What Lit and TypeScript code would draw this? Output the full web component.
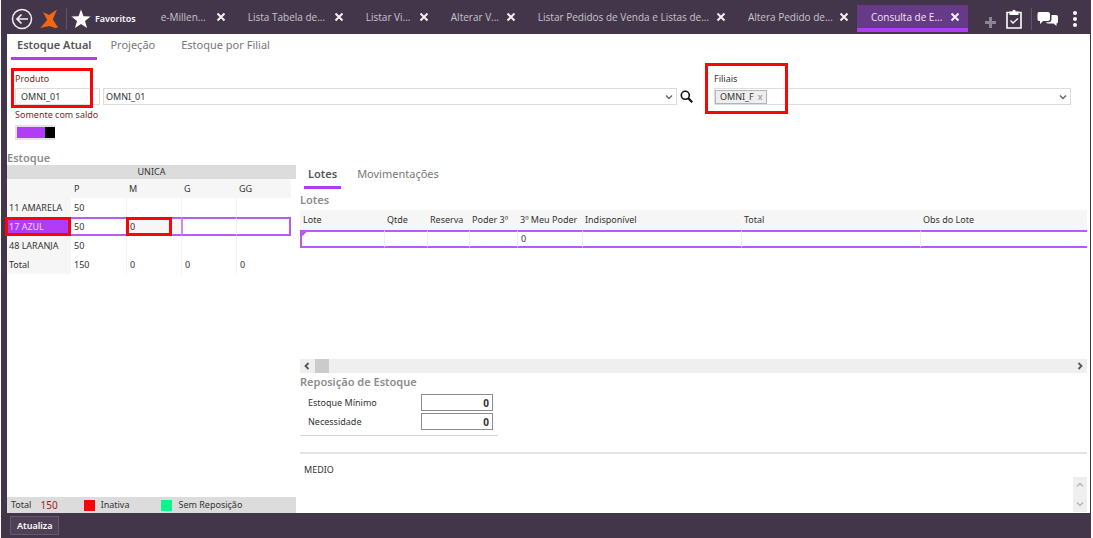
import { LitElement, html, css, svg } from "lit";
import { customElement, state } from "lit/decorators.js";
import { classMap } from "lit/directives/class-map.js";

const WINDOW_TABS = [
  "e-Millen...",
  "Lista Tabela de...",
  "Listar Vi...",
  "Alterar V...",
  "Listar Pedidos de Venda e Listas de...",
  "Altera Pedido de...",
  "Consulta de E...",
];

const SIZES = ["P", "M", "G", "GG"];

const STOCK = [
  { color: "11 AMARELA", values: ["50", "", "", ""] },
  { color: "17 AZUL", values: ["50", "0", "", ""] },
  { color: "48 LARANJA", values: ["50", "", "", ""] },
];

const TOTALS = ["150", "0", "0", "0"];

const LOT_COLUMNS = ["Lote", "Qtde", "Reserva", "Poder 3º", "3º Meu Poder", "Indisponível", "Total", "Obs do Lote"];
const LOT_ROW = ["", "", "", "", "0", "", "", ""];

const closeIcon = html`<svg class="close" viewBox="0 0 10 10" aria-hidden="true"><path d="M1.5 1.5 8.5 8.5M8.5 1.5 1.5 8.5" /></svg>`;

const chevron = (d: string) =>
  html`<svg class="chevron" viewBox="0 0 8 8" aria-hidden="true">${svg`<path d=${d} />`}</svg>`;
const DOWN = "M1 2.5 4 5.5 7 2.5";
const UP = "M1 5.5 4 2.5 7 5.5";
const LEFT = "M5.5 1 2.5 4 5.5 7";
const RIGHT = "M2.5 1 5.5 4 2.5 7";

@customElement("app-root")
export class AppRoot extends LitElement {
  @state() private activeRow = 1;
  @state() private onlyWithStock = true;

  static styles = css`
    :host {
      display: flex;
      flex-direction: column;
      box-sizing: border-box;
      min-height: 100vh;
      padding: 0 2px 0 1px;
      background: #fff;
      color: #333;
      font-family: "Noto Sans", "Open Sans", sans-serif;
      font-size: 9px;
      line-height: 12px;
    }
    *, *::before, *::after { box-sizing: border-box; }
    button, input, select {
      margin: 0;
      padding: 0;
      border: 0;
      border-radius: 0;
      background: none;
      color: inherit;
      font: inherit;
    }
    svg { display: block; }
    h2 {
      margin: 0;
      color: #8c8c8c;
      font-size: 11px;
      font-weight: 600;
      line-height: 14px;
    }

    .topbar {
      display: flex;
      height: 34px;
      padding: 5px 10px 2px 10px;
      background: #43364a;
      color: #fff;
    }
    .brand { display: flex; align-items: center; }
    .back svg { width: 22px; height: 22px; }
    .logo { width: 18px; height: 20px; margin: 0 0 0 7px; }
    .rule { width: 1px; height: 22px; background: #5f5366; }
    .brand .rule { margin: 0 4px 0 8px; }
    .favorites { display: flex; align-items: center; gap: 4px; }
    .favorites svg { width: 20px; height: 20px; }
    .favorites span { font-weight: 600; line-height: 12px; }
    .windows {
      display: grid;
      flex: 1;
      grid-template-columns: 87fr 118fr 85fr 87fr 210fr 123fr 111fr;
      margin: 0 17px 0 11px;
    }
    .window {
      display: flex;
      align-items: center;
      justify-content: space-between;
      padding: 0 8px 4px 14px;
      color: #c9c3cc;
      font-family: "Open Sans", "Noto Sans", sans-serif;
      font-size: 10px;
      white-space: nowrap;
    }
    .window.active {
      padding-bottom: 0;
      border-bottom: 4px solid #b03cf6;
      background: #663a86;
      color: #eee6f3;
    }
    .close {
      width: 10px;
      height: 10px;
      fill: none;
      stroke: #f4f1f5;
      stroke-width: 2;
    }
    .tools { display: flex; align-items: center; }
    .add svg { width: 11px; height: 11px; margin: 8px 10px 0 0; }
    .tasks svg { width: 16px; height: 20px; }
    .tools .rule { margin: 0 5px 0 9px; }
    .chat svg { width: 22px; height: 16px; }
    .more svg { width: 4px; height: 16px; margin: 0 4px 0 14px; }

    main {
      display: flex;
      flex: 1;
      flex-direction: column;
      border-left: 6px solid #43364a;
      border-right: 1px solid #43364a;
    }
    .tabs { display: flex; color: #777; font-size: 11px; line-height: 14px; }
    .tabs button { padding: 0 4px 5px; border-bottom: 3px solid transparent; white-space: nowrap; }
    .tabs button.on { border-color: #b03cf6; color: #555; font-weight: 600; }
    .main-tabs { gap: 7px; padding: 4px 4px 0; }
    .main-tabs button { padding: 0 13px 5px 6px; }
    .main-tabs button.on { padding-right: 6px; }

    .filters {
      display: grid;
      grid-template-columns: 85px minmax(0, 1fr) 14px 374px;
      column-gap: 3px;
      padding: 13px 19px 0 8px;
    }
    .field { position: relative; display: flex; flex-direction: column; gap: 3px; }
    .field label { white-space: nowrap; }
    .required { color: #8e1b22; }
    .box {
      height: 17px;
      width: 100%;
      border: 1px solid #ddd;
      background: #fff;
    }
    input.box { padding: 0 5px; }
    .combo { position: relative; align-self: end; }
    .combo select { display: block; appearance: none; padding: 0 2px; }
    .combo .chevron { position: absolute; top: 5px; right: 4px; pointer-events: none; }
    .chevron { width: 8px; height: 8px; fill: none; stroke: #666; stroke-width: 1.4; }
    .search { align-self: end; margin-bottom: 2px; }
    .search svg { width: 13px; height: 13px; }
    .branches { padding-left: 17px; }
    .branches > div { display: flex; align-items: center; justify-content: space-between; padding: 0 3px 0 0; }
    .chip {
      display: flex;
      align-items: center;
      gap: 4px;
      height: 14px;
      padding: 0 3px 0 4px;
      border: 1px solid #b5b5b5;
      background: #eee;
    }
    .chip button { color: #888; line-height: 10px; }
    .mark { position: absolute; border: 3px solid #f80606; pointer-events: none; }
    .mark-product { inset: -5px 7px -3px -4px; }
    .mark-branches { inset: -10px auto -9px 8px; width: 83px; }

    .switch { display: flex; flex-direction: column; align-items: start; gap: 4px; padding: 4px 8px 0; }
    .switch input {
      appearance: none;
      width: 40px;
      height: 15px;
      border: 2px solid #e6e0ea;
      border-right-width: 0;
      background: linear-gradient(90deg, #b03cf6 28px, #000 28px);
    }
    .switch input:not(:checked) { background: linear-gradient(90deg, #000 10px, #ccc 10px); }

    .panels { display: grid; flex: 1; grid-template-columns: 289px minmax(0, 1fr); padding-top: 11px; }
    .stock { display: flex; flex-direction: column; justify-content: space-between; }
    table { border-collapse: separate; border-spacing: 0; table-layout: fixed; }
    th { font-weight: inherit; text-align: left; }
    td, th { padding: 0; height: 19px; white-space: nowrap; }
    .band { height: 14px; background: #dcdcdc; text-align: center; line-height: 12px; }
    .grid { width: 284px; }
    .grid th, .grid td { padding-left: 3px; }
    .stock .band { width: 289px; padding: 1px 0; }
    .grid .tone { width: 64px; padding-left: 2px; background: #f6f6f6; }
    .grid thead th { background: #f6f6f6; }
    .grid tbody td + td { border-left: 1px solid #f3f3f3; }
    .grid tbody tr.active td { border-top: 2px solid #b65cf0; border-bottom: 2px solid #b65cf0; }
    .grid tbody tr.active td:last-child { border-right: 2px solid #b65cf0; }
    .grid tbody tr.active .tone { background: #b03cf6; color: #eed8fb; }
    .grid tbody tr.active td:nth-of-type(3) { border-left: 2px solid #c98af2; }
    .marked { position: relative; }
    .tone .mark { inset: 0 0 0 -2px; }
    td .mark { inset: -2px 9px -2px -1px; }
    td.marked { background: #f6f6f6; }
    .legend {
      display: flex;
      align-items: center;
      height: 16px;
      padding-left: 4px;
      background: #dcdcdc;
    }
    .legend b { margin: 0 26px 0 9px; color: #9b1c1c; font-weight: 400; font-size: 10px; }
    .swatch { width: 11px; height: 11px; margin-right: 6px; }
    .swatch.inactive { background: #fb0505; }
    .swatch.missing { background: #0cf58a; margin-left: 32px; }

    .details { display: flex; flex-direction: column; padding: 7px 3px 0 4px; }
    .lot-tabs { gap: 12px; padding: 9px 4px 4px; }
    .lots { width: 100%; margin-top: 3px; }
    .lots th { height: 20px; padding-left: 3px; background: #f6f6f6; }
    .lots td {
      height: 18px;
      padding-left: 3px;
      border: 2px solid #b65cf0;
      border-width: 2px 0 2px 1px;
      border-left-color: #f0f0f0;
    }
    .lots td:first-child { border-left: 2px solid #b65cf0; background: linear-gradient(135deg, #b65cf0 3px, #fff 3px); }
    .scroll-x {
      display: flex;
      align-items: center;
      height: 14px;
      margin: 111px 0 2px;
      padding: 0 3px;
      background: #efefef;
    }
    .scroll-x .thumb { width: 14px; height: 14px; margin: 0 auto 0 4px; background: #cbcbcb; }
    .scroll-x .chevron { stroke: #555; stroke-width: 1.8; }
    .restock { width: 198px; padding: 5px 5px 5px 8px; border-bottom: 1px solid #d4d4d4; }
    .restock div { display: flex; align-items: center; justify-content: space-between; margin-bottom: 2px; }
    .restock div:last-child { margin: 0; }
    .restock input {
      width: 72px;
      height: 17px;
      padding: 0 3px;
      border: 1px solid #8c8c8c;
      font-size: 10px;
      font-weight: 700;
      text-align: right;
    }
    .notes {
      display: flex;
      flex: 1;
      justify-content: space-between;
      margin-top: 16px;
      padding: 10px 0 1px 4px;
      border-top: 2px solid #e3e3e3;
    }
    .scroll-y {
      display: flex;
      flex-direction: column;
      align-items: center;
      justify-content: space-between;
      align-self: end;
      width: 14px;
      height: 35px;
      padding: 4px 0;
      background: #efefef;
    }
    .scroll-y .chevron { stroke: #b5b5b5; }

    footer { height: 25px; padding: 3px 9px; background: #43364a; color: #fff; }
    footer button {
      height: 19px;
      padding: 0 6px;
      border: 1px solid #64586a;
      background: #4e4156;
      font-weight: 600;
    }
  `;

  private renderTopbar() {
    const last = WINDOW_TABS.length - 1;
    return html`<header class="topbar">
      <div class="brand">
        <button class="back" aria-label="Voltar">
          <svg viewBox="0 0 22 22" fill="none" stroke="#f1eef3" stroke-width="1.5">
            <circle cx="11" cy="11" r="9.5" />
            <path d="M17 11H6M10.500 6.500 6 11l4.500 4.500" stroke-width="1.700" />
          </svg>
        </button>
        <svg class="logo" viewBox="0 0 18 20" fill="#f4660f" aria-hidden="true">
          <path d="M3 3 9 6 17 .5 12.800 10.500 18 18.500 15 19 9.500 17 .3 19 7.200 11Z" />
        </svg>
        <span class="rule"></span>
        <button class="favorites">
          <svg viewBox="0 0 20 20" fill="#fff" aria-hidden="true">
            <path d="M10 .5 12.5 7.2 19.6 7.5 14 11.9 16 19 10 14.9 4 19 6 11.9.4 7.5 7.5 7.2Z" />
          </svg>
          <span>Favoritos</span>
        </button>
      </div>
      <nav class="windows">
        ${WINDOW_TABS.map(
          (name, i) => html`<button class=${classMap({ window: true, active: i === last })}>
            <span>${name}</span>${closeIcon}
          </button>`
        )}
      </nav>
      <div class="tools">
        <button class="add" aria-label="Nova aba">
          <svg viewBox="0 0 11 11" stroke="#8d8592" stroke-width="3"><path d="M5.5 0v11M0 5.5h11" /></svg>
        </button>
        <button class="tasks" aria-label="Tarefas">
          <svg viewBox="0 0 16 20" fill="none" stroke="#fff">
            <path d="M1 3.500h14v15.500H1Z" stroke-width="1.600" />
            <path d="M3.500 2.500h2.800a1.700 1.700 0 0 1 3.400 0h2.800V6h-9Z" fill="#fff" stroke="none" />
            <path d="M4.500 11.500 7 14 12 9.500" stroke-width="1.300" />
          </svg>
        </button>
        <span class="rule"></span>
        <button class="chat" aria-label="Mensagens">
          <svg viewBox="0 0 22 16" fill="#fff">
            <path d="M2 1h9q2 0 2 2v5q0 2-2 2H6l-3 3v-3H2Q.5 10 .5 8V3q0-2 1.500-2Z" />
            <path d="M14.500 4H19q2 0 2 2v4.500q0 2-1.500 2v2.500l-3-2.500H11q-1.500 0-2-1.300h3q2.500-.2 2.500-2.700Z" />
          </svg>
        </button>
        <button class="more" aria-label="Mais">
          <svg viewBox="0 0 4 16" fill="#fff">
            <circle cx="2" cy="2" r="2" /><circle cx="2" cy="8" r="2" /><circle cx="2" cy="14" r="2" />
          </svg>
        </button>
      </div>
    </header>`;
  }

  private renderFilters() {
    return html`<section class="filters">
        <div class="field">
          <label class="required" for="product">Produto</label>
          <input id="product" class="box" value="OMNI_01" />
          <span class="mark mark-product"></span>
        </div>
        <div class="combo">
          <select class="box" aria-label="Descrição do produto"><option>OMNI_01</option></select>
          ${chevron(DOWN)}
        </div>
        <button class="search" aria-label="Pesquisar">
          <svg viewBox="0 0 13 13" fill="none" stroke="#111">
            <circle cx="5.300" cy="5.300" r="4" stroke-width="1.600" />
            <path d="m8.300 8.300 4 4" stroke-width="2.200" />
          </svg>
        </button>
        <div class="field branches">
          <span>Filiais</span>
          <div class="box">
            <span class="chip">OMNI_F <button aria-label="Remover OMNI_F">x</button></span>
            <button aria-label="Abrir filiais">${chevron(DOWN)}</button>
          </div>
          <span class="mark mark-branches"></span>
        </div>
      </section>
      <div class="switch">
        <label class="required" for="with-stock">Somente com saldo</label>
        <input
          id="with-stock"
          type="checkbox"
          role="switch"
          .checked=${this.onlyWithStock}
          @change=${() => (this.onlyWithStock = !this.onlyWithStock)}
        />
      </div>`;
  }

  private renderStock() {
    return html`<section class="stock">
      <div>
        <h2>Estoque</h2>
        <div class="band">UNICA</div>
        <table class="grid">
          <thead>
            <tr>
              <th class="tone"></th>
              ${SIZES.map((s) => html`<th>${s}</th>`)}
            </tr>
          </thead>
          <tbody>
            ${STOCK.map((row, i) => {
              const active = i === this.activeRow;
              return html`<tr class=${classMap({ active })} @click=${() => (this.activeRow = i)}>
                <th class=${classMap({ tone: true, marked: active })}>
                  ${row.color}${active ? html`<span class="mark"></span>` : ""}
                </th>
                ${row.values.map((v, c) => {
                  const marked = active && c === 1;
                  return html`<td class=${classMap({ marked })}>${v}${marked ? html`<span class="mark"></span>` : ""}</td>`;
                })}
              </tr>`;
            })}
            <tr>
              <th class="tone">Total</th>
              ${TOTALS.map((v) => html`<td>${v}</td>`)}
            </tr>
          </tbody>
        </table>
      </div>
      <div class="legend">
        Total <b>150</b>
        <span class="swatch inactive"></span>Inativa
        <span class="swatch missing"></span>Sem Reposição
      </div>
    </section>`;
  }

  private renderDetails() {
    return html`<section class="details">
      <nav class="tabs lot-tabs">
        <button class="on">Lotes</button>
        <button>Movimentações</button>
      </nav>
      <h2>Lotes</h2>
      <table class="lots">
        <colgroup>
          <col width="84" /><col width="43" /><col width="42" /><col width="48" />
          <col width="65" /><col width="159" /><col width="179" /><col />
        </colgroup>
        <thead>
          <tr>${LOT_COLUMNS.map((c) => html`<th>${c}</th>`)}</tr>
        </thead>
        <tbody>
          <tr>${LOT_ROW.map((c) => html`<td>${c}</td>`)}</tr>
        </tbody>
      </table>
      <div class="scroll-x">${chevron(LEFT)}<span class="thumb"></span>${chevron(RIGHT)}</div>
      <h2>Reposição de Estoque</h2>
      <div class="restock">
        <div><label for="min">Estoque Mínimo</label><input id="min" value="0" /></div>
        <div><label for="need">Necessidade</label><input id="need" value="0" /></div>
      </div>
      <div class="notes">
        <span>MEDIO</span>
        <div class="scroll-y">${chevron(UP)}${chevron(DOWN)}</div>
      </div>
    </section>`;
  }

  render() {
    return html`${this.renderTopbar()}
      <main>
        <nav class="tabs main-tabs">
          <button class="on">Estoque Atual</button>
          <button>Projeção</button>
          <button>Estoque por Filial</button>
        </nav>
        ${this.renderFilters()}
        <div class="panels">${this.renderStock()}${this.renderDetails()}</div>
      </main>
      <footer><button>Atualiza</button></footer>`;
  }
}
